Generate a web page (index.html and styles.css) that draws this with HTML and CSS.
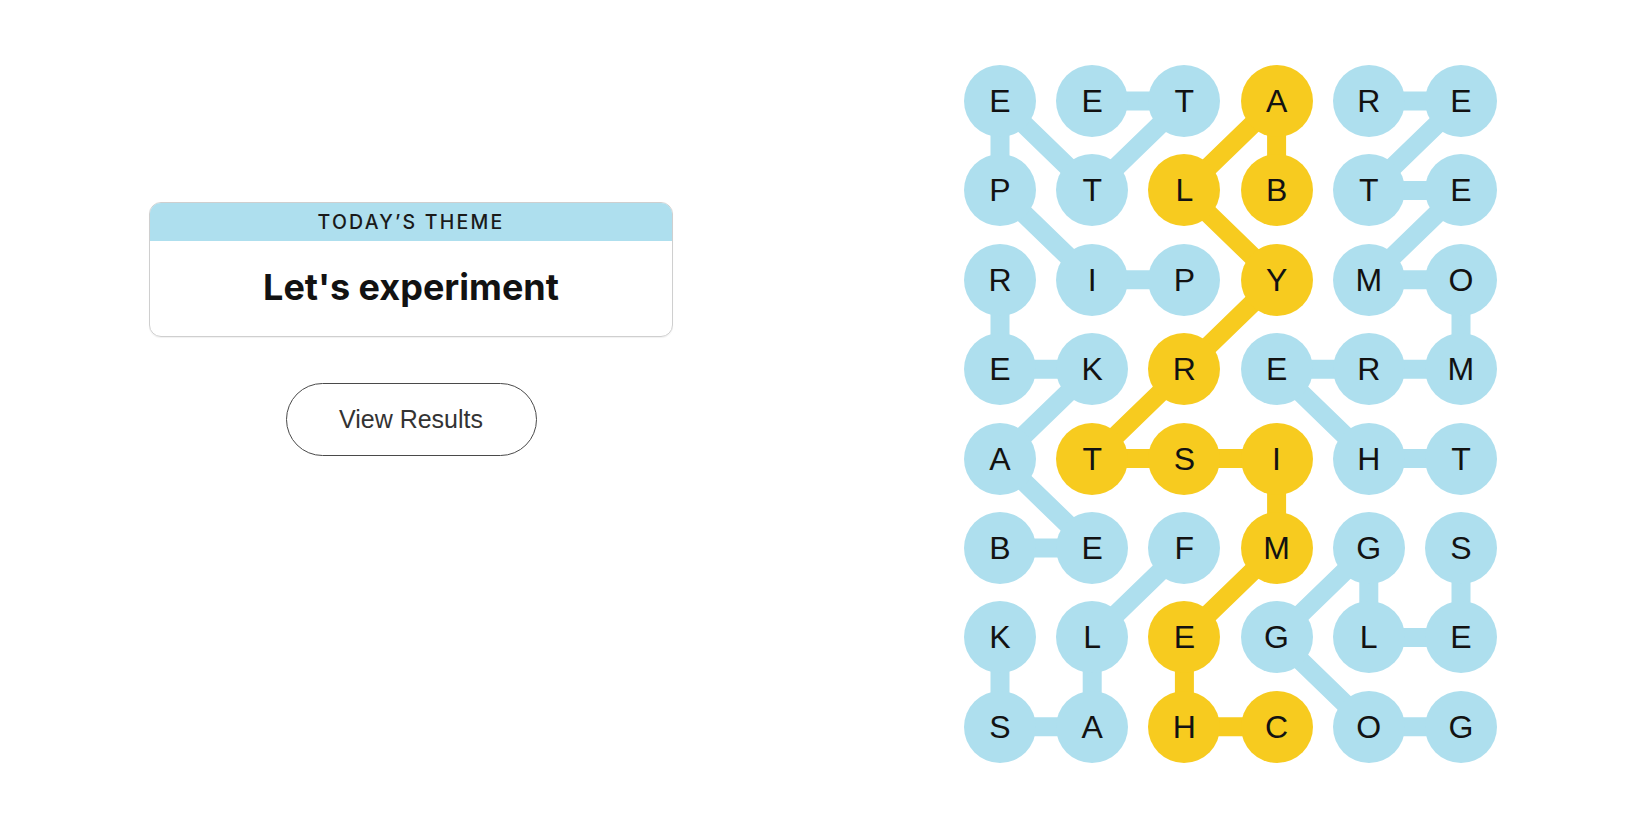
FILE: index.html
```html
<!DOCTYPE html>
<html lang="en">
<head>
<meta charset="utf-8">
<title>Strands</title>
<link rel="stylesheet" href="styles.css">
</head>
<body>
<main class="page">
  <section class="info">
    <div class="theme-card">
      <div class="theme-label">TODAY’S THEME</div>
      <div class="theme-title">Let's experiment</div>
    </div>
    <button class="results-btn" type="button">View Results</button>
  </section>
  <section class="board-wrap">
    <div class="board">
      <svg class="links" viewBox="0 0 533 698" width="533" height="698" aria-hidden="true">
        <polyline class="link theme" points="220.4,214.8 128.2,214.8 36,125.4 36,36 128.2,125.4 220.4,36 128.2,36"/>
        <polyline class="link theme" points="497,393.6 404.8,393.6 312.6,304.2 404.8,304.2 497,304.2 497,214.8 404.8,214.8 497,125.4 404.8,125.4 497,36 404.8,36"/>
        <polyline class="link theme" points="36,483 128.2,483 36,393.6 128.2,304.2 36,304.2 36,214.8"/>
        <polyline class="link theme" points="220.4,483 128.2,572.4 128.2,661.8 36,661.8 36,572.4"/>
        <polyline class="link theme" points="497,661.8 404.8,661.8 312.6,572.4 404.8,483 404.8,572.4 497,572.4 497,483"/>
        <polyline class="link span" points="312.6,661.8 220.4,661.8 220.4,572.4 312.6,483 312.6,393.6 220.4,393.6 128.2,393.6 220.4,304.2 312.6,214.8 220.4,125.4 312.6,36 312.6,125.4"/>
      </svg>
      <div class="grid">
        <div class="cell theme">E</div><div class="cell theme">E</div><div class="cell theme">T</div><div class="cell span">A</div><div class="cell theme">R</div><div class="cell theme">E</div>
        <div class="cell theme">P</div><div class="cell theme">T</div><div class="cell span">L</div><div class="cell span">B</div><div class="cell theme">T</div><div class="cell theme">E</div>
        <div class="cell theme">R</div><div class="cell theme">I</div><div class="cell theme">P</div><div class="cell span">Y</div><div class="cell theme">M</div><div class="cell theme">O</div>
        <div class="cell theme">E</div><div class="cell theme">K</div><div class="cell span">R</div><div class="cell theme">E</div><div class="cell theme">R</div><div class="cell theme">M</div>
        <div class="cell theme">A</div><div class="cell span">T</div><div class="cell span">S</div><div class="cell span">I</div><div class="cell theme">H</div><div class="cell theme">T</div>
        <div class="cell theme">B</div><div class="cell theme">E</div><div class="cell theme">F</div><div class="cell span">M</div><div class="cell theme">G</div><div class="cell theme">S</div>
        <div class="cell theme">K</div><div class="cell theme">L</div><div class="cell span">E</div><div class="cell theme">G</div><div class="cell theme">L</div><div class="cell theme">E</div>
        <div class="cell theme">S</div><div class="cell theme">A</div><div class="cell span">H</div><div class="cell span">C</div><div class="cell theme">O</div><div class="cell theme">G</div>
      </div>
    </div>
  </section>
</main>
</body>
</html>
```

FILE: styles.css
```css
* { box-sizing: border-box; }

html, body {
  margin: 0;
  padding: 0;
  background: #ffffff;
}

body {
  font-family: "Inter", "Liberation Sans", Arial, sans-serif;
  color: #121212;
}

.page {
  display: flex;
  width: 1650px;
  height: 825px;
}

.info {
  width: 822px;
  display: flex;
  flex-direction: column;
  align-items: center;
  padding-top: 202px;
}

.theme-card {
  width: 524px;
  border: 1px solid #cfcfcf;
  border-radius: 12px;
  overflow: hidden;
  box-shadow: 0 1px 1px rgba(0, 0, 0, 0.06);
}

.theme-label {
  height: 38px;
  background: #aedfee;
  display: flex;
  align-items: center;
  justify-content: center;
  font-size: 19.5px;
  font-weight: 500;
  letter-spacing: 2.2px;
  color: #1a1a1a;
}

.theme-title {
  height: 95px;
  display: flex;
  align-items: center;
  justify-content: center;
  padding-bottom: 4px;
  font-size: 36px;
  font-weight: 700;
  color: #121212;
}

.results-btn {
  margin-top: 46px;
  width: 251px;
  height: 73px;
  border: 1px solid #4a4a4a;
  border-radius: 37px;
  background: #ffffff;
  font-family: "Liberation Sans", Arial, sans-serif;
  font-size: 25px;
  color: #333333;
  cursor: pointer;
}

.board-wrap {
  width: 828px;
  padding-top: 65px;
  padding-left: 142px;
}

.board {
  position: relative;
  width: 533px;
  height: 698px;
}

.links {
  position: absolute;
  left: 0;
  top: 0;
}

.link {
  fill: none;
  stroke-width: 19;
  stroke-linecap: round;
  stroke-linejoin: round;
}

.link.theme { stroke: #aedfee; }
.link.span { stroke: #f7cb1f; }

.grid {
  position: relative;
  display: grid;
  grid-template-columns: repeat(6, 72px);
  grid-auto-rows: 72px;
  column-gap: 20.2px;
  row-gap: 17.4px;
}

.cell {
  width: 72px;
  height: 72px;
  border-radius: 50%;
  display: flex;
  align-items: center;
  justify-content: center;
  font-family: "Liberation Sans", Arial, sans-serif;
  font-size: 32px;
  color: #121212;
  padding-top: 1px;
}

.cell.theme { background: #aedfee; }
.cell.span { background: #f7cb1f; }
```
